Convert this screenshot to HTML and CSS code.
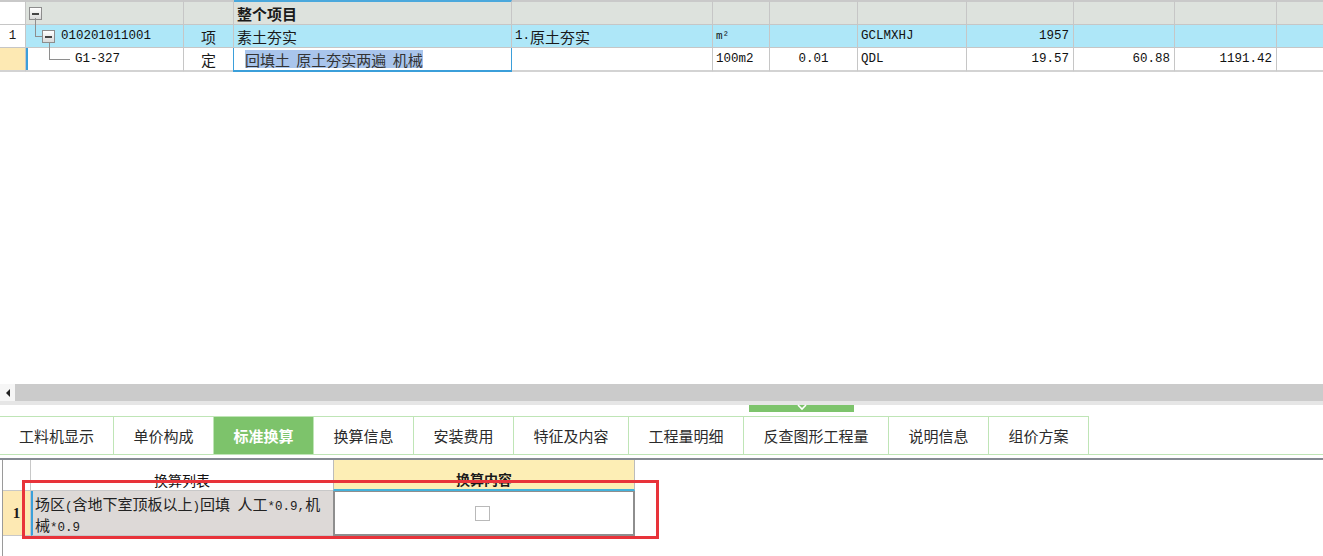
FILE: index.html
```html
<!DOCTYPE html>
<html lang="zh">
<head>
<meta charset="utf-8">
<title>标准换算</title>
<link rel="stylesheet" href="styles.css">
</head>
<body>
<div class="top">
  <div class="grid">
    <div class="c h rn"></div>
    <div class="c h code"><span class="tbox"></span></div>
    <div class="c h"></div>
    <div class="c h name sel-top"><b>整个项目</b></div>
    <div class="c h"></div>
    <div class="c h"></div>
    <div class="c h"></div>
    <div class="c h"></div>
    <div class="c h"></div>
    <div class="c h"></div>
    <div class="c h"></div>
    <div class="c h last"></div>

    <div class="c r1 rn plain"><span class="num">1</span></div>
    <div class="c r1 code"><span class="tbox tbox2"></span><span class="mono">010201011001</span></div>
    <div class="c r1 center">项</div>
    <div class="c r1 name">素土夯实</div>
    <div class="c r1"><span class="mono">1.</span>原土夯实</div>
    <div class="c r1"><span class="mono small">m²</span></div>
    <div class="c r1"></div>
    <div class="c r1"><span class="mono">GCLMXHJ</span></div>
    <div class="c r1 right"><span class="mono">1957</span></div>
    <div class="c r1"></div>
    <div class="c r1"></div>
    <div class="c r1 last"></div>

    <div class="c r2 rn yellow"></div>
    <div class="c r2 code focus-left"><span class="mono child">G1-327</span></div>
    <div class="c r2 center">定</div>
    <div class="c r2 name sel-cell"><span class="hl">回填土 原土夯实两遍 机械</span></div>
    <div class="c r2"></div>
    <div class="c r2"><span class="mono">100m2</span></div>
    <div class="c r2 center"><span class="mono">0.01</span></div>
    <div class="c r2"><span class="mono">QDL</span></div>
    <div class="c r2 right"><span class="mono">19.57</span></div>
    <div class="c r2 right"><span class="mono">60.88</span></div>
    <div class="c r2 right"><span class="mono">1191.42</span></div>
    <div class="c r2 last"></div>

    <span class="tl tl-v1"></span><span class="tl tl-h1"></span>
    <span class="tl tl-v2"></span><span class="tl tl-h2"></span>
  </div>
</div>

<div class="hscroll">
  <div class="sb-btn"><span class="sb-arrow"></span></div>
  <div class="sb-track"></div>
</div>
<div class="sb-shadow"></div>
<div class="splitter">
  <div class="handle">
    <svg width="14" height="7" viewBox="0 0 14 7"><path d="M3 1 L7 5 L11 1" fill="none" stroke="#ffffff" stroke-width="1.6"/></svg>
  </div>
</div>

<div class="tabs">
  <div class="tab w114">工料机显示</div>
  <div class="tab">单价构成</div>
  <div class="tab active">标准换算</div>
  <div class="tab">换算信息</div>
  <div class="tab">安装费用</div>
  <div class="tab w115">特征及内容</div>
  <div class="tab w115">工程量明细</div>
  <div class="tab w145">反查图形工程量</div>
  <div class="tab">说明信息</div>
  <div class="tab">组价方案</div>
</div>

<div class="bottom">
  <div class="bgrid">
    <div class="b bh b0"></div>
    <div class="b bh b1">换算列表</div>
    <div class="b bh b2"><b>换算内容</b></div>
    <div class="b bh bfill"></div>

    <div class="b br b0 ynum">1</div>
    <div class="br b1 item">场区<span class="a">(</span>含地下室顶板以上<span class="a">)</span>回填<span class="a">&nbsp;</span>人工<span class="a">*0.9,</span>机械<span class="a">*0.9</span></div>
    <div class="b br b2 val"><span class="chk"></span></div>
    <div class="b br bfill"></div>
  </div>
  <div class="redbox"></div>
</div>
</body>
</html>
```

FILE: styles.css
```css
* { box-sizing: border-box; }
html, body { margin: 0; padding: 0; background: #ffffff; }
body {
  width: 1323px;
  height: 556px;
  overflow: hidden;
  font-family: "Noto Sans CJK SC", "Noto Sans", sans-serif;
  font-size: 15px;
  color: #1a1a1a;
}

/* ---------- top grid ---------- */
.top { height: 384px; }
.grid {
  position: relative;
  display: grid;
  grid-template-columns: 26px 158px 50px 278px 201px 57px 88px 109px 107px 101px 102px 1fr;
  grid-template-rows: 25px 23px 24px;
}
.c {
  border-right: 1px solid #c6c6c6;
  border-bottom: 1px solid #c6c6c6;
  display: flex;
  align-items: center;
  padding: 0 3px;
  white-space: nowrap;
  overflow: hidden;
  line-height: 1;
}
.c.last { border-right: none; }
.h { background: #dde2dd; border-top: 2px solid #c9c9c9; }
.h.rn { background: #ffffff; }
.h b { font-weight: 700; }
.r1 { background: #aee7f8; }
.r1.plain { background: #ffffff; }
.r2 { background: #ffffff; border-bottom: 2px solid #d3d3d3; }
.r2.yellow { background: #fde9b3; }
.rn { justify-content: center; padding: 0; }
.center { justify-content: center; }
.right { justify-content: flex-end; padding-right: 4px; }
.mono {
  font-family: "Liberation Mono", "DejaVu Sans Mono", monospace;
  font-size: 12.5px;
  color: #111;
  padding-top: 1px;
}
.mono.small { font-size: 11px; }
.num { font-family: "Liberation Mono", monospace; font-size: 12.5px; }
.sel-top { border-top-color: #4aa8dc; }
.sel-cell { border-left: 1px solid #3b9fda; border-right: 1px solid #3b9fda; border-bottom: 2px solid #3b9fda; margin-left: -1px; padding-left: 11px; }
.hl { background: #a9c5ec; color: #333; padding: 2px 0 1px; word-spacing: 3px; }
.focus-left { box-shadow: inset 2px 0 0 #3b9fda; }
.code { padding-left: 3px; }
.child { margin-left: 46px; }

.tbox {
  width: 13px;
  height: 13px;
  border: 1px solid #8d8d8d;
  background: linear-gradient(#ffffff, #d9d9d9);
  position: relative;
  flex: none;
  margin-right: 6px;
}
.tbox::after {
  content: "";
  position: absolute;
  left: 2px; right: 2px; top: 5px;
  height: 2px;
  background: #444;
}
.tbox2 { margin-left: 13px; }
.tl { position: absolute; background: #8e8e8e; }
.tl-v1 { left: 35px; top: 18px; width: 1px; height: 18px; }
.tl-h1 { left: 35px; top: 36px; width: 7px; height: 1px; }
.tl-v2 { left: 49px; top: 42px; width: 1px; height: 18px; }
.tl-h2 { left: 49px; top: 59px; width: 21px; height: 1px; }

/* ---------- scrollbar ---------- */
.hscroll { display: flex; height: 17px; background: #cbcbcb; }
.sb-btn {
  width: 15px;
  background: #f6f6f6;
  display: flex;
  align-items: center;
  justify-content: center;
}
.sb-arrow {
  width: 0; height: 0;
  border-top: 4px solid transparent;
  border-bottom: 4px solid transparent;
  border-right: 4px solid #222;
}
.sb-track { flex: 1; }
.sb-shadow { height: 4px; background: #e6e6e6; }
.splitter { height: 11px; padding-left: 749px; }
.handle {
  width: 105px;
  height: 7px;
  background: #7dc46c;
  display: flex;
  justify-content: center;
  align-items: flex-start;
}
.handle svg { display: block; margin-top: -1px; }

/* ---------- tabs ---------- */
.tabs {
  display: flex;
  height: 39px;
  border-bottom: 1px solid #bfe5b6;
}
.tab {
  width: 100px;
  border-top: 1px solid #bfe5b6;
  border-right: 1px solid #bfe5b6;
  display: flex;
  align-items: center;
  justify-content: center;
  font-size: 15px;
  color: #2b2b2b;
}
.tab.w114 { width: 114px; }
.tab.w115 { width: 115px; }
.tab.w145 { width: 145px; }
.tab.active { background: #7dc36b; color: #ffffff; font-weight: 700; }

/* ---------- bottom grid ---------- */
.bottom {
  position: relative;
  margin-top: 3px;
  border-top: 2px solid #858b93;
  height: 100px;
  padding-left: 2px;
}
.bgrid {
  display: grid;
  grid-template-columns: 28px 303px 301px 1fr;
  grid-template-rows: 31px 45px;
  border-left: 1px solid #9a9a9a;
  height: 100%;
  align-content: start;
}
.b { display: flex; align-items: center; }
.bh { border-bottom: 1px solid #c8c8c8; }
.bh.b0 { border-right: 1px solid #c8c8c8; }
.bh.b1 { justify-content: center; border-right: 1px solid #c8c8c8; font-size: 14px; color: #111; padding-top: 10px; }
.bh.b2 { justify-content: center; background: #fdeeb5; border-right: 1px solid #bcbcbc; border-left: 1px solid #bcbcbc; border-bottom: 2px solid #43b2dc; font-size: 14px; padding-top: 9px; margin-left: -1px; }
.bh.bfill { border-bottom: none; }
.br.b0 { background: #fde9b3; justify-content: center; border-right: 1px solid #c8c8c8; border-bottom: 1px solid #c8c8c8; font-family: "Liberation Serif", serif; font-weight: 700; font-size: 15px; }
.item {
  background: #ddd9d7;
  border-left: 2px solid #3aa0da;
  border-right: 1px solid #c8c8c8;
  border-bottom: 1px solid #c8c8c8;
  padding: 4px 2px 0 2px;
  font-size: 15px;
  line-height: 18px;
  color: #222;
}
.item .a {
  font-family: "Liberation Mono", "DejaVu Sans Mono", monospace;
  font-size: 12.5px;
}
.val {
  border: 2px solid #8e8e8e;
  border-top-width: 1px;
  justify-content: center;
  margin-left: -1px;
  padding-right: 4px;
}
.chk {
  width: 15px;
  height: 15px;
  border: 1px solid #b9b9b9;
  background: #ffffff;
}
.redbox {
  position: absolute;
  left: 22px;
  top: 20px;
  width: 637px;
  height: 59px;
  border: 3px solid #e8333a;
}
```
